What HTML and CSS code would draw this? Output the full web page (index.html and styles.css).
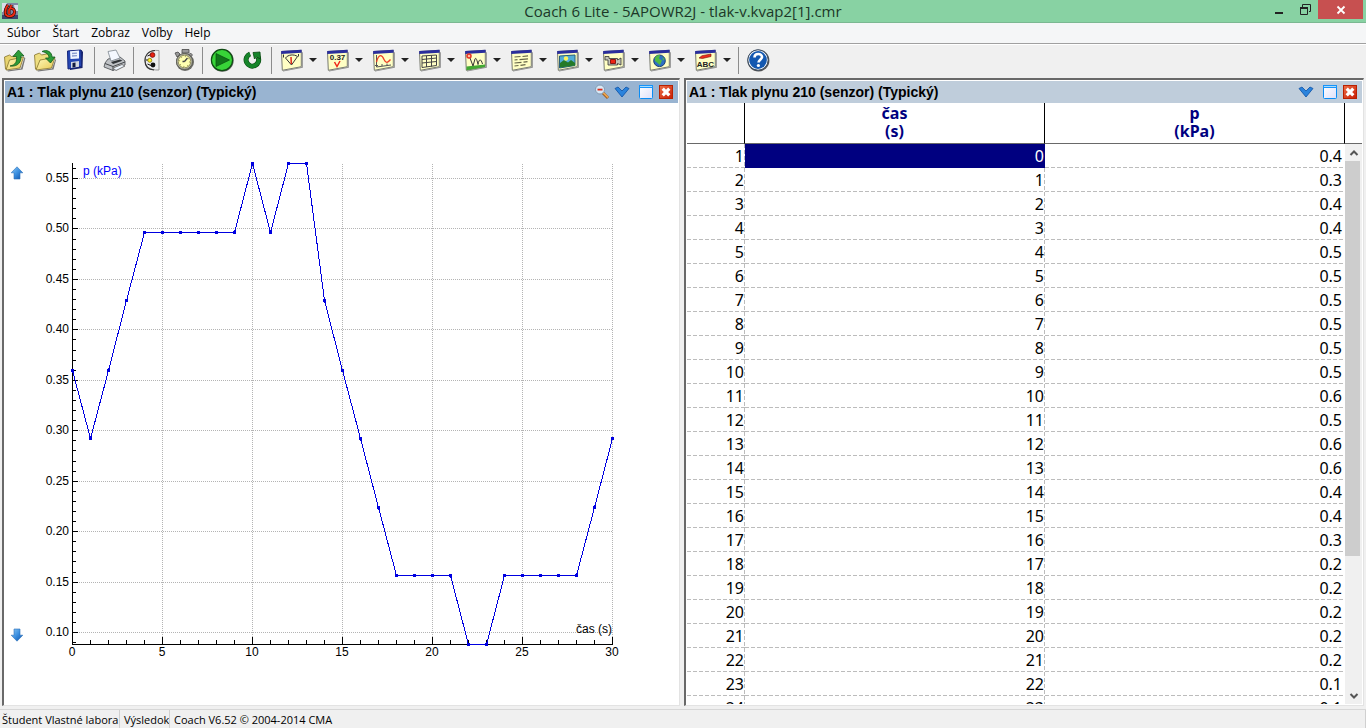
FILE: index.html
```html
<!DOCTYPE html>
<html lang="sk">
<head>
<meta charset="utf-8">
<title>Coach 6 Lite</title>
<link rel="stylesheet" href="styles.css">
</head>
<body>
<svg class="defs" aria-hidden="true">
  <defs>
    <linearGradient id="blueArrow" x1="0" y1="0" x2="1" y2="1"><stop offset="0" stop-color="#8cc8f4"/><stop offset=".5" stop-color="#3b8fe0"/><stop offset="1" stop-color="#0b4fa8"/></linearGradient>
    <linearGradient id="folder" x1="0" y1="0" x2="1" y2="1"><stop offset="0" stop-color="#fffbc0"/><stop offset="1" stop-color="#e8c850"/></linearGradient>
    <linearGradient id="pane" x1="0" y1="0" x2="1" y2="1"><stop offset="0" stop-color="#ffffff"/><stop offset="1" stop-color="#dde0fa"/></linearGradient>
    <linearGradient id="red" x1="0" y1="0" x2="1" y2="1"><stop offset="0" stop-color="#ee7048"/><stop offset="1" stop-color="#c81c04"/></linearGradient>
    <symbol id="win" viewBox="0 0 24 24">
      <path d="M4 22.8 23 19V4l.8.5V19.8L4 23.6z" fill="#8a8a8a"/>
      <path d="M2.500 3.500 22.300 2.300V18.700L3.300 22.300z" fill="#ffffc4" stroke="#777a70"/>
      <path d="M2.200 3 22.600 1.800V4.800L2.200 6z" fill="#2a2e9c"/>
    </symbol>
    <symbol id="chev" viewBox="0 0 16 16"><path d="M1 4.500 4 3l4 4 4-4 3 1.500L8 13z" fill="#2a83dc" stroke="#0c50a4" stroke-width=".8"/></symbol>
    <symbol id="max" viewBox="0 0 16 16"><rect x="1.500" y="1.500" width="13" height="13" rx="1" fill="url(#pane)" stroke="#0a8cf4"/><path d="M1 1h14v3H1z" fill="#1694fa"/><path d="M2 2h12v1H2z" fill="#a8dcff"/></symbol>
    <symbol id="closeRed" viewBox="0 0 16 16"><rect x="1.500" y="1.500" width="13" height="13" fill="url(#red)" stroke="#b82000"/><path d="M4.700 4.700l6.600 6.600M11.300 4.700l-6.600 6.600" stroke="#fff" stroke-width="3.200"/></symbol>
  </defs>
</svg>

<header class="titlebar">
  <svg class="app-icon" viewBox="0 0 16 16"><path d="M0 0h16v16H0z" fill="#8087a4"/><path d="M0 0h5L1 9H0zM12 2h4v6h-3z" fill="#d8dce8"/><path d="M0 12h16v4H0z" fill="#3c466c"/><path d="M6 2C3.500 5 3 8 3.500 11c1 3 7 3 8.500 0s0-5-2-5.500-3 .5-3 1.500v4M9.500 2 8 5.500" fill="none" stroke="#380800" stroke-width="3"/><path d="M6 2C3.500 5 3 8 3.500 11c1 3 7 3 8.500 0s0-5-2-5.500-3 .5-3 1.500v4M9.500 2 8 5.500" fill="none" stroke="#f02c14" stroke-width="1.700"/></svg>
  <h1 class="title">Coach 6 Lite - 5APOWR2J - tlak-v.kvap2[1].cmr</h1>
  <div class="caption-buttons">
    <button class="caption" aria-label="Minimalizovať"><svg viewBox="0 0 12 12"><path d="M2 8h8v2H2z" fill="#222"/></svg></button>
    <button class="caption" aria-label="Obnoviť"><svg viewBox="0 0 12 12"><path d="M3.500 3V.500h8v7H10" fill="none" stroke="#222"/><path d="M1.500 4v6.500h7V4" fill="none" stroke="#222"/><path d="M1 3h8v2H1z" fill="#222"/></svg></button>
    <button class="caption caption-close" aria-label="Zavrieť"><svg viewBox="0 0 12 12"><path d="m2.500 2.500 7 7M9.500 2.500l-7 7" stroke="#fff" stroke-width="1.800"/></svg></button>
  </div>
</header>

<nav class="menubar">
  <button>Súbor</button><button>Štart</button><button>Zobraz</button><button>Voľby</button><button>Help</button>
</nav>

<div class="toolbar" role="toolbar">
  <button class="tool" aria-label="Otvoriť"><svg viewBox="0 0 24 24"><path d="M4 22.500 18 20.500 21.500 9l.8 1.200L19.500 21.500 5 23.500z" fill="#777"/><path d="M2.500 21 1.500 9l5-2 2 1.500 7-1.500 1 3-2 9z" fill="#e8d470" stroke="#84712a" stroke-width=".8"/><path d="M3 22 6.500 12 20.500 9 17 20z" fill="url(#folder)" stroke="#84712a" stroke-width=".8"/><path d="M7 18c6-1 7-5 6.500-9.500H10L15.500 2 21 8l-3-.2C18.500 14 15 19 7 18z" fill="#2c9c38" stroke="#125a1c" stroke-width=".8"/></svg></button>
  <button class="tool" aria-label="Uložiť ako"><svg viewBox="0 0 24 24"><path d="M4 22.500 19 20.500 22.500 11l.5 1L20.500 21.500 5 23.500z" fill="#777"/><path d="M2.500 21 1.500 7l5-2 2 2 7-1.500 1 4-2 9z" fill="#eede80" stroke="#84712a" stroke-width=".8"/><path d="M3 22 7 12 22 9.500 18.500 20z" fill="url(#folder)" stroke="#84712a" stroke-width=".8"/><path d="M9 3.500C14 1 19 4 19 9h3L17.500 15 12.500 10H16C16 6 13 4.500 9 3.500z" fill="#2c9c38" stroke="#125a1c" stroke-width=".8"/></svg></button>
  <button class="tool" aria-label="Uložiť"><svg viewBox="0 0 24 24"><path d="m5 3 13.500-1L20 4l-.5 16L7 22z" fill="#17226a"/><path d="m4.500 3 13.500-1 .5 16.500L5 21z" fill="#2547b4" stroke="#15267c"/><path d="m7 3.300 9-.7v8L7.500 11z" fill="#eef4ff"/><path d="m9 5.500 5-.4M9 8l5-.3" stroke="#8a9cd0" stroke-width="1.300"/><path d="m8 14 8-1v5.700L8 20z" fill="#d4d9e2"/><path d="m9.500 15 3-.4v4.400l-3 .5z" fill="#111a40"/></svg></button>
  <span class="sep"></span>
  <button class="tool" aria-label="Tlačiť"><svg viewBox="0 0 24 24"><path d="m3 15 3-4 12-2 5 4v4L11 22.500 2 19z" fill="#bfc2c6" stroke="#55585c" stroke-width=".9"/><path d="M6 3.500 14 2l4 8-9 3z" fill="#f4f8ff" stroke="#7c858e" stroke-width=".8"/><path d="m3 15.500 8 3L23 14M11 18.500v4" stroke="#45484c" fill="none"/><path d="m9 14 9-2.500 2.500 1.200L11 16z" fill="#303438"/><path d="m11 20 9-3.500 3 1.500-9 4.500z" fill="#eef6ff" stroke="#777"/></svg></button>
  <span class="sep"></span>
  <button class="tool" aria-label="Panel"><svg viewBox="0 0 24 24"><path d="M18 2.500C8.500 1.500 4 7 4 12.500S8.500 22.500 18 22z" fill="#ededed" stroke="#999"/><path d="M14 2.500C7 3 4 7.500 4 12.500S7 21.500 13 22" fill="none" stroke="#333" stroke-width="1.200"/><path d="M10 6.500 6.500 8M8 12H5M10 17.500l-3.500-1.500" stroke="#111"/><circle cx="11.500" cy="7" r="2.400" fill="#e82010" stroke="#600" stroke-width=".7"/><circle cx="8.800" cy="12.300" r="2" fill="#fff028" stroke="#766800" stroke-width=".7"/><circle cx="12" cy="17" r="2.400" fill="#111"/></svg></button>
  <button class="tool" aria-label="Časovač"><svg viewBox="0 0 24 24"><path d="M11 1.500h7V5h-7zM4 5l3-1 2 2-3 3zM21.500 7l-2-2-2 2 2 2z" fill="#999" stroke="#484848" stroke-width=".8"/><circle cx="14" cy="14" r="9" fill="#6c6c68"/><circle cx="13.500" cy="13.500" r="8" fill="#b5b5a7" stroke="#5c5c52"/><circle cx="13.500" cy="13.500" r="6.300" fill="#ffffb0" stroke="#92905c"/><path d="M13.500 13.500 16.500 10M13.500 13.500h-2" stroke="#444" stroke-width="1.300"/><circle cx="13.500" cy="13.500" r="5" fill="none" stroke="#8c8848" stroke-dasharray="1 2.900"/></svg></button>
  <span class="sep"></span>
  <button class="tool" aria-label="Spustiť"><svg viewBox="0 0 24 24"><circle cx="12.400" cy="12.500" r="11.300" fill="#666"/><circle cx="12" cy="12" r="10.600" fill="#38d438" stroke="#104c14" stroke-width="1.200"/><path d="M6 5.500 19.500 12 6 18.500z" fill="#12751a" stroke="#084e0e" stroke-width=".7"/></svg></button>
  <button class="tool" aria-label="Opakovať"><svg viewBox="0 0 24 24"><path d="M10 6a6.300 6.300 0 1 0 8 3" fill="none" stroke="#09470f" stroke-width="5"/><path d="M10 6a6.300 6.300 0 1 0 8 3" fill="none" stroke="#16852a" stroke-width="3.800"/><path d="M13 4.500 20 4l.5 7-4-2-2 2z" fill="#16852a" stroke="#09470f" stroke-width=".8"/></svg></button>
  <span class="sep"></span>

  <div class="combos">
    <div class="combo"><button class="tool" aria-label="Merač"><svg viewBox="0 0 24 24"><use href="#win"/><path d="M6.500 10C9 6.500 15 6 18.500 8.500L12.500 17z" fill="none" stroke="#333"/><path d="M12.300 16 12 9" stroke="#e02818" stroke-width="1.500"/><path d="M4.500 6.500v3M19.500 6v2.500" stroke="#333"/></svg></button><button class="drop" aria-label="Ponuka merača"></button></div>
    <div class="combo"><button class="tool" aria-label="Hodnota"><svg viewBox="0 0 24 24"><use href="#win"/><text x="12.500" y="12" class="mini bold">0.37</text><path d="m9.500 14 2.500 4.500 3-5.500" fill="none" stroke="#f02818" stroke-width="1.500"/></svg></button><button class="drop" aria-label="Ponuka hodnoty"></button></div>
    <div class="combo"><button class="tool" aria-label="Diagram"><svg viewBox="0 0 24 24"><use href="#win"/><path d="M5.500 7v12L20 17M4 17.500h3M11 18v-2M16 17.500v-2" fill="none" stroke="#555"/><path d="M5.500 14C8 5 11 7 13 11.500s4 3 6.500 0" fill="none" stroke="#ee3d25" stroke-width="1.300"/></svg></button><button class="drop" aria-label="Ponuka diagramu"></button></div>
    <div class="combo"><button class="tool" aria-label="Tabuľka"><svg viewBox="0 0 24 24"><use href="#win"/><path d="m5 8 14.500-1v10.500L5 19.500zM5 11.500 19.500 10M5 15l14.500-1.500M9.500 8v11M14.500 7.500v11" fill="none" stroke="#444"/></svg></button><button class="drop" aria-label="Ponuka tabuľky"></button></div>
    <div class="combo"><button class="tool" aria-label="Animácia"><svg viewBox="0 0 24 24"><use href="#win"/><path d="m3.500 18.500 18.500-2v2.500L3.500 22.300z" fill="#42a832"/><path d="m7 10 3 8 2-7c1-2 2 1 3 5.500 1-6 3-6 4.500-.5" fill="none" stroke="#333"/><circle cx="6" cy="8" r="2" fill="#ffc0a8" stroke="#e83424" stroke-width="1.500"/></svg></button><button class="drop" aria-label="Ponuka animácie"></button></div>
    <div class="combo"><button class="tool" aria-label="Text"><svg viewBox="0 0 24 24"><use href="#win"/><path d="m5.500 9 6-.5m2 0 5.500-.6M5.500 12l3-.3m2 0 8.500-.8M5.500 15l7-.7m2-.1 4-.5M5.500 18l4-.5m2-.2 5-.7" stroke="#666649" stroke-width="1.200"/></svg></button><button class="drop" aria-label="Ponuka textu"></button></div>
    <div class="combo"><button class="tool" aria-label="Obrázok"><svg viewBox="0 0 24 24"><use href="#win"/><path d="m4.500 8 15.500-1v10.500L4.500 20z" fill="#52acd8" stroke="#28607a"/><path d="m5 15 4-3 4 2.500 3-2.500 4 3v2.500L5 19.500z" fill="#247a28"/><circle cx="11" cy="10.500" r="2.200" fill="#fff45c"/></svg></button><button class="drop" aria-label="Ponuka obrázka"></button></div>
    <div class="combo"><button class="tool" aria-label="Video"><svg viewBox="0 0 24 24"><use href="#win"/><path d="M4 8.500h4v2h8.500v1.500l3.500-2v7l-3.500-1.500v1.500H7v-5H4z" fill="#c4c4b8" stroke="#333" stroke-width=".8"/><path d="M9.500 11.500h5v4h-5z" fill="#ee2414" stroke="#700" stroke-width=".8"/></svg></button><button class="drop" aria-label="Ponuka videa"></button></div>
    <div class="combo"><button class="tool" aria-label="Internet"><svg viewBox="0 0 24 24"><use href="#win"/><circle cx="12.500" cy="12.800" r="5.800" fill="#2e70c4" stroke="#1c3f70"/><path d="M8 10c1-2.500 4-3.500 5-2.500l-1 3 3 2-2 4.500c-2-1-3-3-5-4z" fill="#51bb43"/><path d="m15.500 8.500 2 3-1.500 1z" fill="#51bb43"/></svg></button><button class="drop" aria-label="Ponuka internetu"></button></div>
    <div class="combo"><button class="tool" aria-label="Popis"><svg viewBox="0 0 24 24"><use href="#win"/><text x="12.300" y="18.500" class="mini">ABC</text><path d="m6 10 3-2.300L18 6v2.500L9.500 10.500z" fill="#ee2c1c" stroke="#771008" stroke-width=".6"/></svg></button><button class="drop" aria-label="Ponuka popisu"></button></div>
  </div>
  <span class="sep"></span>
  <button class="tool" aria-label="Pomocník"><svg viewBox="0 0 24 24"><circle cx="12.400" cy="12.500" r="11" fill="#555"/><circle cx="12" cy="12" r="10.200" fill="#fff" stroke="#344860"/><circle cx="12" cy="12" r="8.900" fill="#1458b0"/><path d="M8.500 9.500C8.500 5 16 5 16 9c0 2.500-3.500 3-3.500 5.500" fill="none" stroke="#fff" stroke-width="2.600"/><circle cx="12.400" cy="17.500" r="1.600" fill="#fff"/></svg></button>
</div>

<main class="workspace">
  <section class="panel">
    <div class="panel-head active">
      <h2>A1 : Tlak plynu 210 (senzor) (Typický)</h2>
      <button class="zoom-out" aria-label="Zmenšiť"><svg viewBox="0 0 16 16"><path d="m8.500 8.500 5.500 5.500" stroke="#9c5c20" stroke-width="3"/><path d="m9 8.500 5 5" stroke="#f0a850" stroke-width="1.700"/><circle cx="6" cy="5.500" r="4.500" fill="#d7e9f7" stroke="#8299b0"/><path d="M3.500 4.700h5v1.800h-5z" fill="#dd2a18"/></svg></button>
      <button aria-label="Ponuka"><svg viewBox="0 0 16 16"><use href="#chev"/></svg></button>
      <button class="spaced" aria-label="Maximalizovať graf"><svg viewBox="0 0 16 16"><use href="#max"/></svg></button>
      <button aria-label="Zavrieť graf"><svg viewBox="0 0 16 16"><use href="#closeRed"/></svg></button>
    </div>
    <div class="chart-body">
      <div class="range">
        <button aria-label="Nahor"><svg viewBox="0 0 14 14"><path d="m7 .8 5.800 6H10V13H4V6.800H1.200z" fill="url(#blueArrow)" stroke="#2b70ba" stroke-width=".6"/></svg></button>
        <button aria-label="Nadol"><svg viewBox="0 0 14 14"><path d="M7 13.200 1.200 7.200H4V1h6v6.200h2.800z" fill="url(#blueArrow)" stroke="#2b70ba" stroke-width=".6"/></svg></button>
      </div>
      <svg class="chart" id="chart" viewBox="29 103 649 601" preserveAspectRatio="xMinYMin meet" role="img" aria-label="Graf tlaku v čase"></svg>
    </div>
  </section>

  <section class="panel wide">
    <div class="panel-head">
      <h2>A1 : Tlak plynu 210 (senzor) (Typický)</h2>
      <button aria-label="Ponuka tabuľky"><svg viewBox="0 0 16 16"><use href="#chev"/></svg></button>
      <button class="spaced" aria-label="Maximalizovať tabuľku"><svg viewBox="0 0 16 16"><use href="#max"/></svg></button>
      <button aria-label="Zavrieť tabuľku"><svg viewBox="0 0 16 16"><use href="#closeRed"/></svg></button>
    </div>
    <div class="table-body">
      <div class="table-clip">
        <table>
          <colgroup><col class="c-num"><col><col></colgroup>
          <thead><tr><th></th><th>čas<br>(s)</th><th>p<br>(kPa)</th></tr></thead>
          <tbody id="rows"></tbody>
        </table>
      </div>
      <div class="side">
        <div class="side-head"></div>
        <div class="scrollbar">
          <button aria-label="Posunúť nahor"><svg viewBox="0 0 10 10"><path d="M1.500 7 5 3.500 8.500 7" fill="none" stroke="#555" stroke-width="2"/></svg></button>
          <div class="track"><div class="thumb"></div></div>
          <button aria-label="Posunúť nadol"><svg viewBox="0 0 10 10"><path d="M1.500 3 5 6.500 8.500 3" fill="none" stroke="#555" stroke-width="2"/></svg></button>
        </div>
      </div>
    </div>
  </section>
</main>

<footer class="status">
  <span class="cell user">Študent Vlastné labora</span>
  <span class="cell result">Výsledok</span>
  <span class="cell about">Coach V6.52 © 2004-2014 CMA</span>
</footer>
<script src="app.js"></script>
</body>
</html>
```
FILE: styles.css
```css
* { box-sizing: border-box; }
body {
  margin: 0;
  height: 100vh;
  display: flex;
  flex-direction: column;
  overflow: hidden;
  background: #f0f0f0;
  color: #000;
  font: 12px/16px "Open Sans", "Noto Sans", sans-serif;
}
button {
  margin: 0;
  padding: 0;
  border: 0;
  background: none;
  font: inherit;
  color: inherit;
}
svg { display: block; }
.defs { position: absolute; width: 0; height: 0; }

.titlebar {
  flex: none;
  height: 23px;
  display: grid;
  grid-template-columns: 1fr auto 1fr;
  background: #88d2a3;
  border-bottom: 1px solid #7bb892;
}
.app-icon { width: 16px; height: 16px; margin: 3px 2px; }
.title { margin: 0; font-size: 15px; line-height: 22px; font-weight: 400; color: #1c3828; }
.caption-buttons { display: flex; justify-content: flex-end; padding-right: 3px; }
.caption { width: 26px; height: 19px; display: grid; place-items: center; }
.caption svg { width: 12px; height: 12px; }
.caption-close { width: 45px; background: #c75050; }

.menubar {
  flex: none;
  height: 21px;
  display: flex;
  gap: 12px;
  padding: 0 7px;
  background: #f5f6f7;
  border-bottom: 1px solid #a0a0a0;
}
.toolbar {
  flex: none;
  height: 34px;
  display: flex;
  align-items: center;
  padding-bottom: 3px;
  border-top: 1px solid #fff;
}
.tool { width: 30px; height: 30px; display: grid; place-items: center; }
.tool svg { width: 24px; height: 24px; }
.sep { width: 1px; height: 27px; margin: 0 4px; background: #8c8c8c; }
.combos { display: flex; gap: 2px; }
.combo { display: flex; }
.drop { width: 14px; display: grid; place-items: center; }
.drop::before {
  content: "";
  border: 4px solid transparent;
  border-top-color: #222;
  border-bottom: 0;
}
.mini { font: bold 8px "Liberation Sans", sans-serif; text-anchor: middle; fill: #222; }

.workspace {
  flex: 1;
  min-height: 0;
  display: flex;
  gap: 4px;
  padding: 0 2px;
}
.panel {
  flex: 678 1 0;
  min-width: 0;
  display: flex;
  flex-direction: column;
  padding: 1px;
  background: #fff;
  border: 2px solid #696969;
  border-right: 1px solid #e3e3e3;
  border-bottom: 1px solid #e3e3e3;
}
.panel.wide { flex-grow: 680; }
.panel-head {
  flex: none;
  height: 22px;
  display: flex;
  align-items: center;
  gap: 4px;
  padding: 0 4px 0 2px;
  background: #bfcddb;
}
.panel-head.active { background: #99b4d1; }
.panel-head h2 {
  flex: 1;
  margin: 0;
  font: bold 14px/22px "Liberation Sans", Arial, sans-serif;
}
.panel-head button, .panel-head svg { width: 16px; height: 16px; }
.panel-head .spaced { margin-left: 4px; }

.chart-body { flex: 1; min-height: 0; display: flex; }
.range {
  width: 24px;
  display: flex;
  flex-direction: column;
  justify-content: space-between;
  align-items: center;
  padding: 63px 0 62px;
}
.range svg { width: 14px; height: 14px; }
.chart { flex: 1; min-width: 0; height: 100%; }
.chart text { font: 12px "Liberation Sans", Arial, sans-serif; }
.grid { stroke: #b4b4b4; stroke-dasharray: 1 1; shape-rendering: crispEdges; fill: none; }
.axis { stroke: #000; shape-rendering: crispEdges; fill: none; }
.line { stroke: #0000e0; shape-rendering: crispEdges; fill: none; }
.dot { fill: #0000e0; shape-rendering: crispEdges; }
.end { text-anchor: end; }
.mid { text-anchor: middle; }
.chart .blue { fill: #0000ff; }

.table-body { flex: 1; min-height: 0; display: flex; }
.table-clip { flex: 1; min-width: 0; overflow: hidden; }
table {
  width: 100%;
  table-layout: fixed;
  border-collapse: separate;
  border-spacing: 0;
  font: 16px/22px "Noto Sans", "Open Sans", sans-serif;
}
.c-num { width: 58px; }
th {
  height: 41px;
  padding: 0 0 3px;
  border-right: 1px solid #000;
  border-bottom: 1px solid #696969;
  color: #000080;
  font-weight: 700;
  line-height: 18px;
}
td {
  height: 24px;
  padding: 1px 1px 1px 0;
  text-align: right;
  background:
    repeating-linear-gradient(90deg, #bcbcbc 0 4px, transparent 4px 6px) left bottom / 100% 1px no-repeat,
    repeating-linear-gradient(180deg, #bcbcbc 0 4px, transparent 4px 6px) right top / 1px 100% no-repeat;
}
td:last-child {
  padding-right: 3px;
  background: repeating-linear-gradient(90deg, #bcbcbc 0 4px, transparent 4px 6px) left bottom / 100% 1px no-repeat;
}
td.selected { color: #fff; background: #000080; }

.side { width: 17px; display: flex; flex-direction: column; }
.side-head { height: 41px; border-bottom: 1px solid #696969; }
.scrollbar { flex: 1; display: flex; flex-direction: column; background: #f0f0f0; }
.scrollbar button { height: 17px; display: grid; place-items: center; }
.scrollbar svg { width: 10px; height: 10px; }
.track { flex: 1; padding-right: 2px; }
.thumb { height: 75%; background: #cdcdcd; }

.status {
  flex: none;
  height: 19px;
  margin-top: 3px;
  display: flex;
  border-top: 1px solid #d7d7d7;
  font-size: 11px;
  line-height: 19px;
}
.cell {
  padding-left: 4px;
  border-right: 1px solid #d0d0d0;
  overflow: hidden;
  white-space: nowrap;
}
.user { width: 120px; padding-left: 2px; }
.result { width: 50px; }
.about { flex: 1; }
```
FILE: app.js
```js
const pressure = [
  0.36, 0.292, 0.36, 0.429, 0.496, 0.496, 0.496, 0.496, 0.496, 0.496, 0.565,
  0.496, 0.565, 0.565, 0.429, 0.36, 0.292, 0.224, 0.1565, 0.1565, 0.1565, 0.1565,
  0.088, 0.088, 0.1565, 0.1565, 0.1565, 0.1565, 0.1565, 0.224, 0.292
];

const px = t => 72 + Math.round(t * 18);
const py = p => 178 + Math.round((0.55 - p) * 1009);

let grid = "";
let axis = "M72.5 163V644.5H613";
let labels = "";

for (let n = 9; n <= 56; n++) {
  const y = py(n / 100) + 0.5;
  const major = n % 5 === 0;
  axis += `M73 ${y}h${major ? 5 : 3}`;
  if (major) {
    grid += `M79 ${y}H613`;
    labels += `<text class="end" x="69" y="${y + 3.5}">${(n / 100).toFixed(2)}</text>`;
  }
}
for (let t = 0; t <= 30; t++) {
  const x = px(t) + 0.5;
  const major = t % 5 === 0;
  axis += `M${x} 644v${major ? -7 : -4}`;
  if (major) {
    if (t) grid += `M${x} 164V638`;
    labels += `<text class="mid" x="${x - 0.5}" y="656">${t}</text>`;
  }
}
const points = pressure.map((p, t) => `${px(t) + 0.5},${py(p) + 0.5}`).join(" ");
const dots = pressure.map((p, t) => `M${px(t) - 1} ${py(p) - 1}h3v3h-3z`).join("");

document.getElementById("chart").innerHTML = `
  <path class="grid" d="${grid}"/>
  <path class="axis" d="${axis}"/>
  <polyline class="line" points="${points}"/>
  <path class="dot" d="${dots}"/>
  ${labels}
  <text class="blue" x="83" y="175">p (kPa)</text>
  <text class="end" x="612" y="633">čas (s)</text>`;

const visibleRows = 24;
document.getElementById("rows").innerHTML = pressure.slice(0, visibleRows).map((p, t) =>
  `<tr><td>${t + 1}</td><td${t === 0 ? ' class="selected"' : ""}>${t}</td><td>${p.toFixed(1)}</td></tr>`
).join("");
```
